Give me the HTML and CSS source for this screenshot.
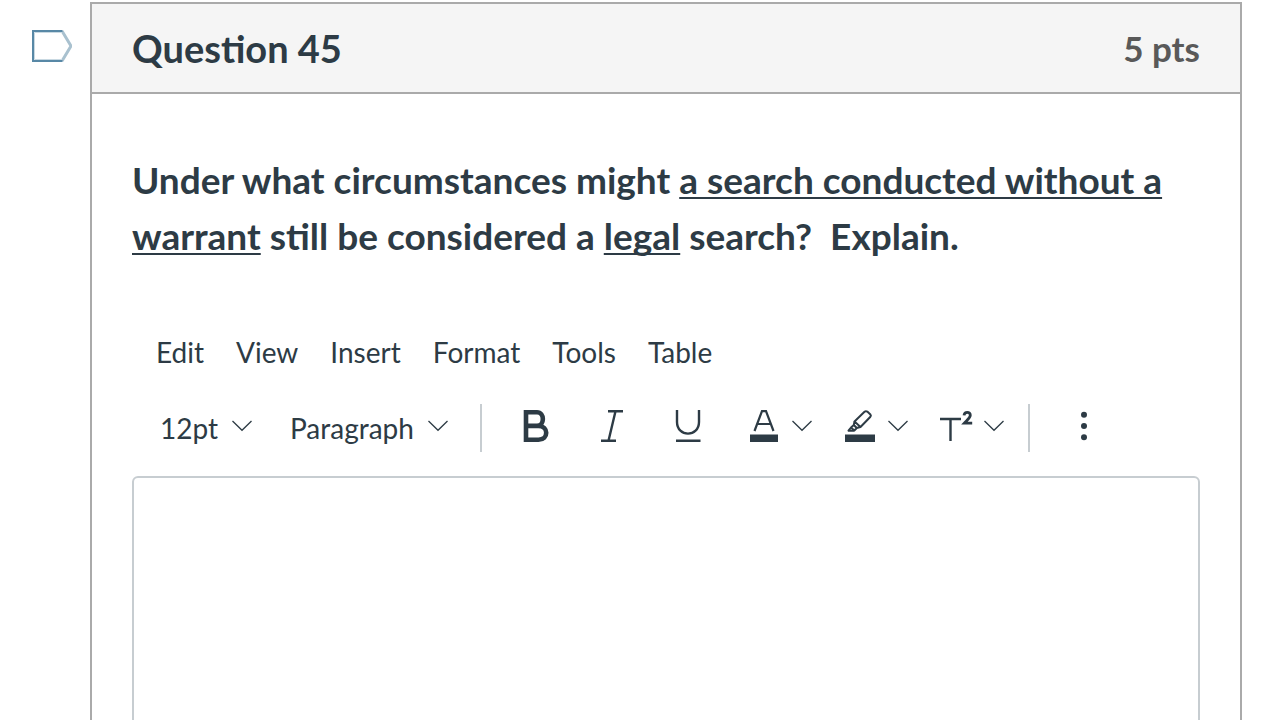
FILE: index.html
```html
<!DOCTYPE html>
<html lang="en">
<head>
<meta charset="utf-8">
<meta name="viewport" content="width=device-width, initial-scale=1">
<title>Question 45</title>
<link rel="stylesheet" href="styles.css">
</head>
<body>
<svg class="symbols" aria-hidden="true">
  <symbol id="chevron" viewBox="0 0 20 12"><path d="M0.5 1 L10 10.3 L19.5 1" fill="none" stroke="currentColor" stroke-width="1.3"/></symbol>
</svg>
<main class="page">
  <button class="flag" type="button" aria-label="Flag question">
    <svg width="40" height="32" viewBox="0 0 40 32" fill="none">
      <path d="M30 1L39 16L30 31" stroke="#a9c1cf" stroke-width="3"/>
      <path d="M30 2.5H2.5V29.5H30" stroke="#c9d9e2" stroke-width="1"/>
      <path d="M30.5 1H1V31H30.5" stroke="#5888a6" stroke-width="2"/>
    </svg>
  </button>
  <article class="question">
    <header class="question-header">
      <h1 class="question-name">Question 45</h1>
      <span class="points">5 pts</span>
    </header>
    <div class="question-body">
      <p class="prompt" id="prompt">Under what circumstances might <u>a search conducted without a warrant</u> still be considered a <u>legal</u> search?&nbsp; Explain.</p>
      <section class="editor">
        <nav class="menubar" aria-label="Editor menu">
          <button type="button">Edit</button>
          <button type="button">View</button>
          <button type="button">Insert</button>
          <button type="button">Format</button>
          <button type="button">Tools</button>
          <button type="button">Table</button>
        </nav>
        <div class="toolbar">
          <div class="selects">
            <label class="picker size">
              <select aria-label="Font size"><option>12pt</option></select>
              <svg class="chevron"><use href="#chevron"/></svg>
            </label>
            <label class="picker block">
              <select aria-label="Block style"><option>Paragraph</option></select>
              <svg class="chevron"><use href="#chevron"/></svg>
            </label>
          </div>
          <div class="tools">
            <button class="tool" type="button" aria-label="Bold">
              <svg width="32" height="32" viewBox="0 0 32 32" fill="none" stroke="currentColor" stroke-width="4.6"><path d="M6 2.3H17C24.8 2.3 24.8 15.9 17 15.9H6M6 15.9H18.5C28.8 15.9 28.8 29.7 18.5 29.7H6M6 0V32"/></svg>
            </button>
            <button class="tool" type="button" aria-label="Italic">
              <svg width="32" height="32" viewBox="0 0 32 32" fill="none" stroke="currentColor" stroke-width="2.4"><path d="M12 1.2H27M5 30.8H20M19.5 1.2L12.5 30.8"/></svg>
            </button>
            <button class="tool" type="button" aria-label="Underline">
              <svg width="32" height="32" viewBox="0 0 32 32" fill="none" stroke="currentColor" stroke-width="2.4"><path d="M5 0V12C5 27.5 27 27.5 27 12V0M4 30.8H28.5"/></svg>
            </button>
          </div>
          <div class="colors">
            <button class="split" type="button" aria-label="Text color">
              <svg width="32" height="32" viewBox="0 0 32 32" fill="none" stroke="currentColor" stroke-width="2.2"><path d="M6.5 21L14 1.2H18L25.5 21M9 14H23"/><path d="M2 24.5H30V32H2Z" fill="currentColor" stroke="none"/></svg>
              <svg class="chevron"><use href="#chevron"/></svg>
            </button>
            <button class="split" type="button" aria-label="Background color">
              <svg width="32" height="32" viewBox="0 0 32 32" fill="none" stroke="currentColor" stroke-width="2" stroke-linejoin="round"><path d="M10.5 11.5L20.5 1.8Q21.8 .7 23.3 1.6L26.4 4.4Q27.5 5.6 26.2 7L16.5 17ZM10.5 11.5L9.8 15L12.8 18L16.5 17M9.8 15L7 17.5L10.3 20.5L12.8 18M7 17.5L4.5 20.7H10.3"/><path d="M1 24.5H31V32H1Z" fill="currentColor" stroke="none"/></svg>
              <svg class="chevron"><use href="#chevron"/></svg>
            </button>
            <button class="split" type="button" aria-label="Superscript and subscript">
              <svg width="32" height="32" viewBox="0 0 32 32" fill="none" stroke="currentColor"><path d="M0 9H21M10.5 9V31" stroke-width="2.4"/><path d="M24 5.4C24.5 1.2 30.5 1.5 30.3 5.2C30.2 8 27 10.2 24.3 13.2H32.2" stroke-width="2.8"/></svg>
              <svg class="chevron"><use href="#chevron"/></svg>
            </button>
          </div>
          <div class="more">
            <button class="tool" type="button" aria-label="More">
              <svg width="32" height="32" viewBox="0 0 32 32" fill="currentColor"><circle cx="16" cy="4.7" r="3"/><circle cx="16" cy="16" r="3"/><circle cx="16" cy="27.2" r="3"/></svg>
            </button>
          </div>
        </div>
        <textarea class="answer" aria-labelledby="prompt"></textarea>
      </section>
    </div>
  </article>
</main>
</body>
</html>
```

FILE: styles.css
```css
* { box-sizing: border-box; }

html { overflow: hidden; }

body {
  margin: 0;
  background: #fff;
  color: #2d3b45;
  font-family: Lato, Carlito, sans-serif;
}

button, select, textarea {
  margin: 0;
  padding: 0;
  border: 0;
  background: none;
  color: inherit;
  font: inherit;
}

svg { display: block; }

.symbols { position: absolute; width: 0; height: 0; }

.page {
  display: flex;
  align-items: flex-start;
  gap: 18px;
  padding: 2px 38px 0 32px;
}

.flag { margin-top: 28px; }

.question {
  flex: 1;
  border: 2px solid #aaa;
}

.question-header {
  display: flex;
  align-items: center;
  justify-content: space-between;
  height: 90px;
  padding: 0 40px;
  background: #f5f5f5;
  border-bottom: 2px solid #aaa;
}

.question-name {
  margin: 0;
  font-size: 38px;
  font-weight: 700;
}

.points {
  color: #595959;
  font-size: 35px;
  font-weight: 700;
}

.question-body { padding: 58px 40px; }

.prompt {
  margin: 0 0 58px;
  font-size: 37px;
  font-weight: 700;
  line-height: 56px;
}

.prompt u {
  text-decoration-thickness: 2px;
  text-underline-offset: 3px;
  text-decoration-skip-ink: none;
}

.editor { font-size: 28px; line-height: 40px; }

.menubar {
  display: flex;
  gap: 32px;
  padding: 10px 24px 0;
}

.toolbar {
  display: flex;
  height: 48px;
  margin: 32px 0 24px;
}

.selects {
  display: flex;
  gap: 38px;
  padding: 0 32px 0 28px;
}

.picker { display: grid; align-items: center; }

.picker select {
  grid-area: 1 / 1;
  height: 48px;
  appearance: none;
}

.size { width: 92px; }
.block { width: 158px; }

.picker .chevron { grid-area: 1 / 1; justify-self: end; pointer-events: none; }

.chevron { width: 20px; height: 12px; margin-bottom: 4px; }

.tools {
  display: flex;
  gap: 44px;
  padding-left: 38px;
  border-left: 2px solid #c7cdd1;
}

.tool { padding-bottom: 4px; }

.colors {
  display: flex;
  gap: 32px;
  padding: 0 24px 0 44px;
}

.split {
  display: flex;
  align-items: center;
  gap: 12px;
}

.split svg:first-child { margin-bottom: 4px; overflow: visible; }

.more {
  display: flex;
  padding-left: 38px;
  border-left: 2px solid #c7cdd1;
}

.answer {
  display: block;
  width: 100%;
  height: 400px;
  padding: 16px;
  border: 2px solid #c7cdd1;
  border-radius: 6px;
  resize: none;
}
```
